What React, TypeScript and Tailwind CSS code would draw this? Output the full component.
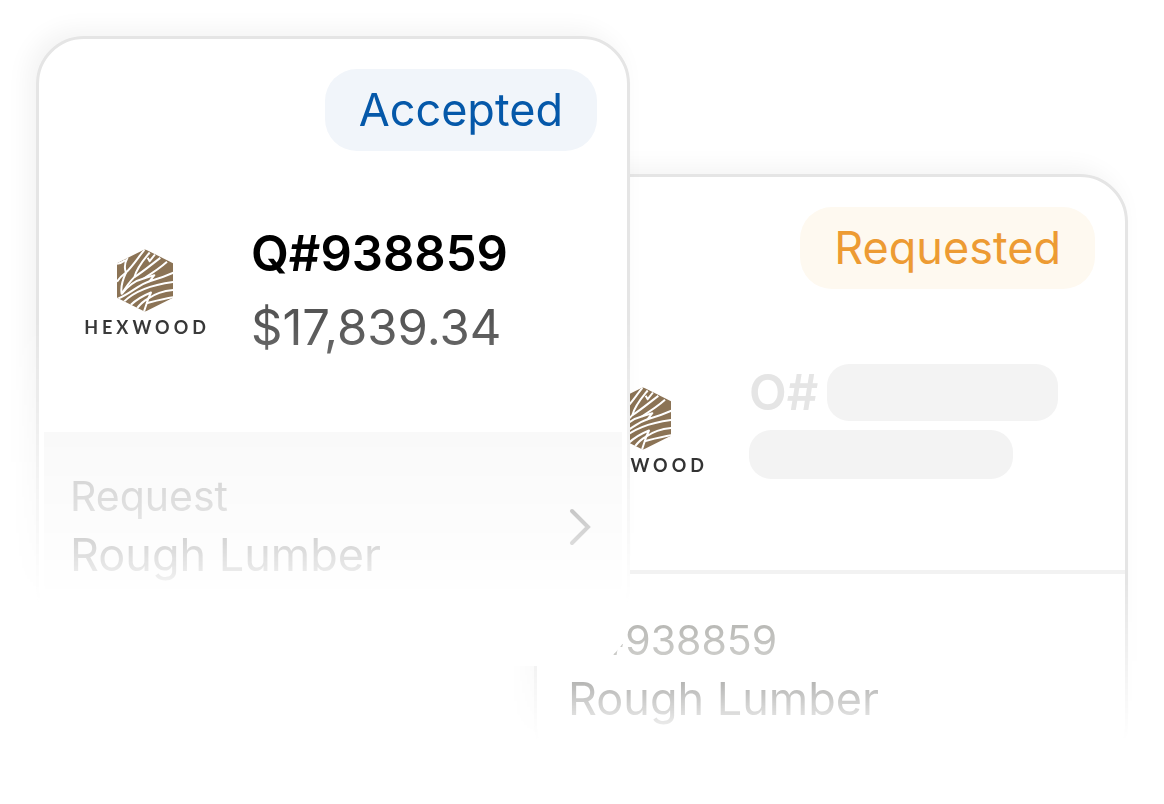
import { clsx } from 'clsx';
import type { ReactNode } from 'react';

const HexwoodLogo = () => (
  <div className="mt-1 flex w-30 shrink-0 flex-col items-center">
    <svg viewBox="0 0 168 188" className="h-[63px] w-14" role="img" aria-label="Hexwood">
      <defs>
        <clipPath id="hex">
          <path d="M84 0 168 42V146L84 188 0 146V42Z" />
        </clipPath>
      </defs>
      <g clipPath="url(#hex)">
        <path d="M0 0H168V188H0Z" fill="#8b7355" />
        <g fill="none" stroke="#fff" strokeWidth="6" strokeLinejoin="round">
          <path d="M32 24C20 46 22 58 27 70C44 54 60 30 82 2" />
          <path d="M0 44C12 42 18 38 26 32" />
          <path d="M27 70C16 78 6 88 0 98" />
          <path d="M27 70C16 94 10 114 14 134C28 112 38 98 52 84C60 54 80 32 98 10" />
          <path d="M52 84C80 66 106 44 130 26" />
          <path d="M92 26 98 36 114 16" />
          <path d="M14 134C36 106 56 94 80 88C106 72 130 56 150 38" />
          <path d="M80 88 112 78 98 96C126 88 148 80 170 70" />
          <path d="M0 150C44 132 64 106 98 96" />
          <path d="M20 158C56 122 108 106 170 98" />
          <path d="M40 168C66 144 82 138 102 130L94 148C118 130 146 124 170 122" />
          <path d="M58 180C70 164 82 154 94 148L80 190" />
          <path d="M88 162C112 156 142 148 170 144" />
        </g>
      </g>
    </svg>
    <span className="mt-[3px] pl-1 font-['Lato',sans-serif] text-lg leading-6 font-bold tracking-[4px] text-[#333]">
      HEXWOOD
    </span>
  </div>
);

interface QuoteCardProps {
  className?: string;
  fade: string;
  status: string;
  statusClass: string;
  summary: ReactNode;
  footer: ReactNode;
}

const QuoteCard = ({ className, fade, status, statusClass, summary, footer }: QuoteCardProps) => (
  <article className={clsx('row-start-1 rounded-[48px] bg-white pb-8', className)}>
    {/* the padding keeps the shadow inside the faded area */}
    <div className={clsx('-mx-9 -mt-9 px-9 pt-9', fade)}>
      <div className="rounded-[48px] border-3 border-[#e5e5e5] bg-white shadow-[-8px_-6px_24px_rgba(0,0,0,0.05)]">
        <div className="flex justify-end px-[30px] pt-[30px]">
          <span className={clsx('rounded-[32px] px-[34px] py-[14px] text-[45px] leading-[54px]', statusClass)}>
            {status}
          </span>
        </div>
        <div className="flex h-[281px] items-center gap-[46px] pl-[46px]">
          <HexwoodLogo />
          {summary}
        </div>
        {footer}
      </div>
    </div>
  </article>
);

export default function App() {
  return (
    <main className="grid min-h-screen grid-cols-[minmax(0,1fr)_96px_minmax(0,1fr)] items-start overflow-hidden bg-white px-9 pt-9 font-['Inter',sans-serif]">
      <QuoteCard
        className="z-10 col-span-2 col-start-1"
        fade="[mask-image:linear-gradient(to_bottom,black_320px,transparent_603px)]"
        status="Accepted"
        statusClass="bg-[#f1f5fa] text-[#0558a9]"
        summary={
          <div className="mb-[2px]">
            <h2 className="text-[49px] leading-[74px] font-semibold text-black">Q#938859</h2>
            <p className="text-[49px] leading-[74px] text-[#555]">$17,839.34</p>
          </div>
        }
        footer={
          <a
            href="#request"
            className="mx-[5px] mb-[5px] flex h-[194px] items-start justify-between rounded-b-[42px] bg-[#f5f5f5] px-[26px] pt-[34px]"
          >
            <span className="flex flex-col">
              <span className="text-[41px] leading-[60px] text-[#a3a3a3]">Request</span>
              <span className="text-[45px] leading-[58px] text-[#444]">Rough Lumber</span>
            </span>
            <svg viewBox="0 0 24 40" className="mt-[41px] mr-1 h-10 w-6" fill="none" stroke="#555" strokeWidth="4">
              <path d="M4 4 20 20 4 36" strokeLinecap="round" />
            </svg>
          </a>
        }
      />
      <QuoteCard
        className="col-span-2 col-start-2 mt-[138px]"
        fade="[mask-image:linear-gradient(to_bottom,black_444px,transparent_603px)]"
        status="Requested"
        statusClass="bg-[#fef9f0] text-[#ed9b33]"
        summary={
          <div className="mb-4 flex flex-col gap-[9px]">
            <div className="flex items-center gap-[9px]">
              <h2 className="text-[49px] leading-[57px] font-semibold text-[#e5e5e5]">O#</h2>
              <div className="h-[57px] w-[231px] rounded-[22px] bg-[#f3f3f3]" />
            </div>
            <div className="h-[49px] w-[264px] rounded-[22px] bg-[#f3f3f3]" />
          </div>
        }
        footer={
          <div className="flex h-[199px] flex-col border-t-4 border-[#f2f2f2] px-[31px] pt-9">
            <span className="text-[41px] leading-[60px] text-[#a0a09b]">Q#938859</span>
            <span className="text-[45px] leading-[58px] text-[#3a3a36]">Rough Lumber</span>
          </div>
        }
      />
    </main>
  );
}
